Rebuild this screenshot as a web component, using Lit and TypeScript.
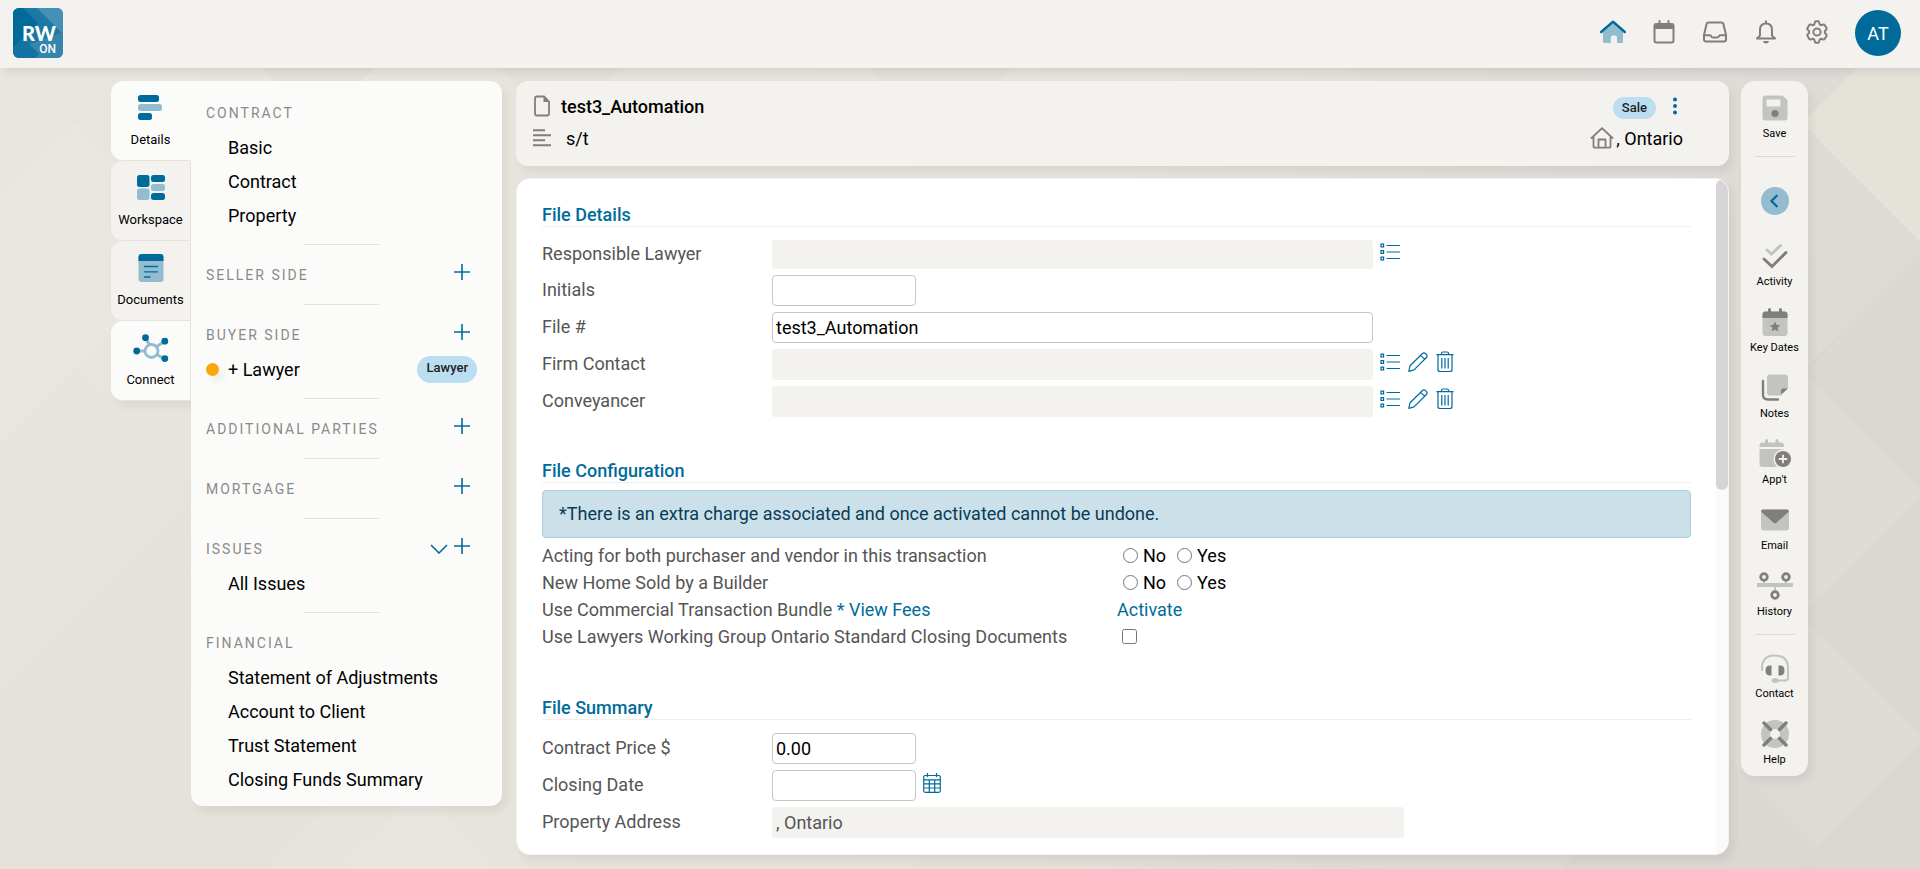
import { LitElement, html, svg, css, nothing, TemplateResult } from "lit";
import { customElement, property } from "lit/decorators.js";
import { classMap } from "lit/directives/class-map.js";

const BLUE = "#006b9b";
const PALE = "#93bcd0";
const GREY = "#807f7e";
const SOFT = "#c3c3c2";

const icon = (w: number, h: number, body: unknown) =>
  html`<svg width=${w} height=${h} viewBox="0 0 ${w} ${h}" fill="none" aria-hidden="true">${body}</svg>`;

const star = "M13 13.5l1.6 3.4 3.7.4-2.8 2.5.8 3.7-3.3-1.9-3.3 1.9.8-3.7-2.8-2.5 3.7-.4z";

const icons: Record<string, () => TemplateResult> = {
  home: () => icon(26, 24, svg`
    <path d="M3 12L13 3.500L23 12V21.500Q23 23 21.500 23H17V17.500Q17 15.500 15 15.500H12.500Q10.800 15.500 10.800 17.500V23H4.500Q3 23 3 21.500Z" fill=${PALE}/>
    <path d="M1.200 12L13 1.700L24.800 12" stroke=${BLUE} stroke-width="2.500" stroke-linecap="round" stroke-linejoin="round"/>`),
  calendar: () => icon(22, 24, svg`
    <rect x="1.500" y="4" width="19" height="18.500" rx="2" stroke=${GREY} stroke-width="2"/>
    <path d="M1 9V5Q1 3.300 3 3.300H19Q21 3.300 21 5V9Z" fill=${GREY}/>
    <path d="M6.500 1V4M15.500 1V4" stroke=${GREY} stroke-width="2" stroke-linecap="round"/>`),
  inbox: () => icon(24, 24, svg`
    <path d="M5.500 2.500H18.500Q20 2.500 20.400 4L23 15V19.500Q23 21.500 21 21.500H3Q1 21.500 1 19.500V15L3.600 4Q4 2.500 5.500 2.500Z M1 15.300H6.500Q8 15.300 8.300 16.500Q8.600 17.500 10 17.500H14Q15.400 17.500 15.700 16.500Q16 15.300 17.500 15.300H23" stroke=${GREY} stroke-width="2" stroke-linejoin="round"/>`),
  bell: () => icon(22, 24, svg`
    <path d="M11 1.200V3M2 18.500H20L17 15.500V10Q17 3.500 11 3.500Q5 3.500 5 10V15.500Z" stroke=${GREY} stroke-width="2" stroke-linejoin="round" stroke-linecap="round"/>
    <path d="M8 21H14Q13.500 23.500 11 23.500Q8.500 23.500 8 21Z" fill=${GREY}/>`),
  gear: () => icon(24, 24, svg`
    <path d="M9.900 2.200Q10 1.300 11 1.300H13Q14 1.300 14.100 2.200L14.500 4Q15 4.900 16 5.300L18.300 4.500Q19.200 4.200 19.700 5L21.600 8.300Q22 9 21.400 9.700L19.900 11Q19.600 12 19.900 13L21.400 14.300Q22 15 21.600 15.700L19.700 19Q19.200 19.800 18.300 19.500L16 18.700Q15 19.100 14.500 20L14.100 21.800Q14 22.700 13 22.700H11Q10 22.700 9.900 21.800L9.500 20Q9 19.100 8 18.700L5.700 19.500Q4.800 19.800 4.300 19L2.400 15.700Q2 15 2.600 14.300L4.100 13Q4.400 12 4.100 11L2.600 9.700Q2 9 2.400 8.300L4.300 5Q4.800 4.200 5.700 4.500L8 5.300Q9 4.900 9.500 4Z" stroke=${GREY} stroke-width="2" stroke-linejoin="round"/>
    <circle cx="12" cy="12" r="3.600" stroke=${GREY} stroke-width="2"/>`),

  details: () => icon(26, 26, svg`
    <rect x="0" y="0" width="21" height="7" rx="2.500" fill=${BLUE}/>
    <rect x="0" y="9" width="24" height="7" rx="2.500" fill=${PALE}/>
    <rect x="0" y="18" width="14" height="7" rx="2.500" fill=${BLUE}/>`),
  workspace: () => icon(28, 26, svg`
    <rect x="0" y="0" width="12.500" height="12" rx="2.500" fill=${BLUE}/>
    <rect x="0" y="13.500" width="12.500" height="11.500" rx="2.500" fill=${PALE}/>
    <rect x="14" y="0" width="14" height="7" rx="2.500" fill=${BLUE}/>
    <rect x="14" y="9" width="14" height="7" rx="2.500" fill=${PALE}/>
    <rect x="14" y="18" width="14" height="7" rx="2.500" fill=${BLUE}/>`),
  documents: () => icon(26, 28, svg`
    <rect x="0.500" y="0" width="25" height="28" rx="3" fill=${PALE}/>
    <path d="M0.500 7V3Q0.500 0 3.500 0H22.500Q25.500 0 25.500 3V7Z" fill=${BLUE}/>
    <path d="M6.500 12.500H19.500M6.500 17.800H19.500M6.500 23H12" stroke=${BLUE} stroke-width="1.300" stroke-linecap="round"/>`),
  connect: () => icon(36, 28, svg`
    <path d="M4 17H13M12.500 4L16.500 11M31.500 7.500L23 13M31.500 25L23 20" stroke=${PALE} stroke-width="3"/>
    <circle cx="18.500" cy="17" r="6.500" stroke=${PALE} stroke-width="2.800"/>
    <circle cx="3.700" cy="17" r="3.400" fill=${BLUE}/><circle cx="12.500" cy="3.700" r="3.400" fill=${BLUE}/>
    <circle cx="31.800" cy="7.200" r="3.400" fill=${BLUE}/><circle cx="31.800" cy="24.600" r="3.400" fill=${BLUE}/>`),

  plus: () => icon(16, 16, svg`<path d="M8 0V16M0 8H16" stroke=${BLUE} stroke-width="1.600"/>`),
  chevron: () => icon(18, 10, svg`<path d="M1 1L9 9L17 1" stroke=${BLUE} stroke-width="1.600"/>`),

  file: () => icon(18, 22, svg`
    <path d="M4 1.500H11L16 6.500V18.500Q16 20.500 14 20.500H4Q2 20.500 2 18.500V3.500Q2 1.500 4 1.500Z" stroke=${GREY} stroke-width="1.800"/>
    <path d="M10.500 1L16.500 7H10.500Z" fill=${GREY}/>`),
  lines: () => icon(18, 18, svg`<path d="M0 1.200H12M0 6.200H18M0 11.200H12M0 16.200H18" stroke=${GREY} stroke-width="2"/>`),
  house: () => icon(24, 22, svg`
    <path d="M1 11.500L12 1.200L23 11.500M3.500 10V19Q3.500 20.700 5 20.700H19Q20.500 20.700 20.500 19V10M8.500 20.500V12.500H15.500V20.500" stroke=${GREY} stroke-width="1.800" stroke-linejoin="round"/>`),
  dots: () => icon(6, 18, svg`<circle cx="3" cy="2.500" r="2" fill=${BLUE}/><circle cx="3" cy="9" r="2" fill=${BLUE}/><circle cx="3" cy="15.500" r="2" fill=${BLUE}/>`),

  list: () => icon(20, 18, svg`
    <path d="M6.500 2.500H20M6.500 9H20M6.500 15.500H20" stroke=${BLUE} stroke-width="1.200"/>
    <path d="M1 1.200H3.600V3.800H1ZM1 7.700H3.600V10.300H1ZM1 14.200H3.600V16.800H1Z" stroke=${BLUE} stroke-width="1.200"/>`),
  pencil: () => icon(20, 20, svg`
    <path d="M0.800 19.300L2 13.800L14.500 1.500Q16 0.200 17.700 1.800L18.300 2.400Q19.800 4 18.400 5.500L6 17.900ZM12.700 3.300L16.600 7.200" stroke=${BLUE} stroke-width="1.200" stroke-linejoin="round"/>`),
  trash: () => icon(18, 22, svg`
    <path d="M0.500 3.700H17.500M5.500 3.500V2.300Q5.500 1 7 1H11Q12.500 1 12.500 2.300V3.500M2 4V18.500Q2 20.500 4 20.500H14Q16 20.500 16 18.500V4M5.800 7V17.500M9 7V17.500M12.200 7V17.500" stroke=${BLUE} stroke-width="1.200"/>`),
  grid: () => icon(18, 20, svg`
    <rect x="0.700" y="2.500" width="16.600" height="16.800" rx="1.500" stroke=${BLUE} stroke-width="1.200"/>
    <path d="M1 6.800H17M1 10.800H17M1 15H17M6.300 7V19M11.700 7V19M4.500 0V4M13.500 0V4" stroke=${BLUE} stroke-width="1.200"/>`),

  save: () => icon(26, 26, svg`
    <path d="M4 .500H20.500L25.500 5V22.500Q25.500 25.500 22.500 25.500H3.500Q.500 25.500 .500 22.500V3.500Q.500 .500 4 .500Z" fill=${SOFT}/>
    <rect x="4.500" y="4.500" width="14" height="7" rx="1" fill="#f3f2ee"/><circle cx="13" cy="18.500" r="3.600" fill=${GREY}/>`),
  collapse: () => icon(28, 28, svg`
    <circle cx="14" cy="14" r="14" fill=${PALE}/><path d="M16.500 8L10.500 14L16.500 20" stroke=${BLUE} stroke-width="2.200"/>`),
  activity: () => icon(26, 26, svg`
    <path d="M5 7L9.500 11L18.500 2.500" stroke=${SOFT} stroke-width="3" stroke-linecap="round"/>
    <path d="M2 16L10 23.500L24 9.500" stroke=${GREY} stroke-width="3" stroke-linecap="round"/>`),
  keydates: () => icon(26, 28, svg`
    <rect x=".500" y="3.500" width="25" height="24.500" rx="3" fill=${SOFT}/>
    <path d="M.500 10V6.500Q.500 3.500 3.500 3.500H22.500Q25.500 3.500 25.500 6.500V10Z" fill=${GREY}/>
    <path d="M7.500 1.500V5M18.500 1.500V5" stroke=${GREY} stroke-width="3" stroke-linecap="round"/><path d=${star} fill=${GREY}/>`),
  notes: () => icon(28, 28, svg`
    <path d="M9 .500H24Q27 .500 27 3.500V14L20 21.500H9Q6 21.500 6 18.500V3.500Q6 .500 9 .500Z" fill=${SOFT}/>
    <path d="M20 20.500V16.500Q20 14.500 22 14.500H27Z" fill=${GREY}/>
    <path d="M2 7V21Q2 25.500 7 25.500H17" stroke=${GREY} stroke-width="2.400" stroke-linecap="round"/>`),
  appt: () => icon(34, 30, svg`
    <path d="M1.500 8V6.500Q1.500 3.500 4.500 3.500H23Q26 3.500 26 6.500V8ZM1.500 10H26V28H4.500Q1.500 28 1.500 25Z" fill=${SOFT}/>
    <path d="M8.500 1.500V5M19 1.500V5" stroke=${SOFT} stroke-width="3" stroke-linecap="round"/>
    <circle cx="25" cy="20" r="9.500" fill="#f3f2ee"/><circle cx="25" cy="20" r="8" fill=${GREY}/>
    <path d="M25 15.800V24.200M20.800 20H29.200" stroke="#f3f2ee" stroke-width="1.800"/>`),
  email: () => icon(28, 22, svg`
    <rect x="0" y=".500" width="28" height="21" rx="3" fill=${SOFT}/>
    <path d="M2 .500H26Q28 .500 28 2.500L15.500 13.700Q14 15 12.500 13.700L0 2.500Q0 .500 2 .500Z" fill=${GREY}/>`),
  history: () => icon(36, 28, svg`
    <path d="M1 12H35V14H1Z M7 8V12M29 8V12M18 14V19" fill=${SOFT} stroke=${SOFT} stroke-width="2"/>
    <circle cx="7" cy="5" r="3.300" stroke=${GREY} stroke-width="2.800"/><circle cx="29" cy="5" r="3.300" stroke=${GREY} stroke-width="2.800"/>
    <circle cx="18" cy="23" r="3.300" stroke=${GREY} stroke-width="2.800"/>`),
  contact: () => icon(30, 30, svg`
    <path d="M2 17V15Q2 2.500 15 2.500Q28 2.500 28 15V24.500Q28 27.500 25 27.500H16" stroke=${SOFT} stroke-width="2" stroke-linecap="round"/>
    <ellipse cx="15" cy="27.500" rx="3.500" ry="2.500" fill=${SOFT}/>
    <path d="M11.500 12.500V22.500H10Q5.500 22.500 5.500 17.500Q5.500 12.500 10 12.500ZM18.500 12.500V22.500H20Q24.500 22.500 24.500 17.500Q24.500 12.500 20 12.500Z" fill=${GREY}/>`),
  help: () => icon(28, 28, svg`
    <circle cx="14" cy="14" r="9.500" stroke=${SOFT} stroke-width="9"/>
    <path d="M3 3L9.500 9.500M25 3L18.500 9.500M3 25L9.500 18.500M25 25L18.500 18.500" stroke=${GREY} stroke-width="3.400" stroke-linecap="round"/>`),
};

const reset = css`
  :host { font-family: Roboto, "Liberation Sans", sans-serif; }
  * { box-sizing: border-box; }
  svg { display: block; flex: none; }
  a { color: inherit; text-decoration: none; }
  button { font: inherit; color: inherit; background: none; border: 0; padding: 0; margin: 0; cursor: pointer; }
`;

@customElement("rw-backdrop")
class RwBackdrop extends LitElement {
  static styles = css`
    :host { display: block; }
    svg { display: block; width: 100%; height: 100%; }
  `;
  render() {
    return html`<svg viewBox="0 0 1920 869" preserveAspectRatio="xMidYMid slice" aria-hidden="true">
      <defs><linearGradient id="base" x1="0" y1="0" x2="1" y2="0.200">
        <stop offset="0" stop-color="#e8e5de"/><stop offset=".600" stop-color="#e6e3dc"/>
        <stop offset=".850" stop-color="#dfdcd7"/><stop offset="1" stop-color="#dedbd6"/>
      </linearGradient></defs>
      <rect width="1920" height="869" fill="url(#base)"/>
      <path d="M75 123L198 246L0 444V196Z" fill="#eae7e0" opacity=".6"/>
      <path d="M75 370L198 493L0 691V445Z" fill="#e5e2db" opacity=".6"/>
      <path d="M0 740L129 869H0ZM198 493L420 715L266 869H129L0 740V691Z" fill="#e4e1db" opacity=".6"/>
      <path d="M340 869L420 790L499 869Z" fill="#e9e6df" opacity=".7"/>
      <path d="M260 68H375L320 120ZM500 68H620L560 128ZM1350 68H1600L1475 193ZM870 68H1010L940 138Z" fill="#dfdcd6" opacity=".5"/>
      <path d="M1560 869L1700 729L1840 869Z" fill="#dbd8d3"/>
      <path d="M1802 123L1857 68H1920V241Z" fill="#e5e2da"/>
      <g fill="#dbd8d3" stroke="#d8d5d0">
        <path d="M1803 371L1925 249V493Z"/><path d="M1803 616L1925 494V738Z"/><path d="M1803 862L1925 740V984Z"/>
      </g>
    </svg>`;
  }
}

@customElement("rw-header")
class RwHeader extends LitElement {
  static styles = [reset, css`
    :host { display: block; }
    .bar { height: 68px; display: flex; align-items: center; justify-content: space-between; padding: 0 19px 2px 13px;
      background: #f3f2ee; box-shadow: 6px 4px 8px rgba(0, 0, 0, .08); }
    .brand { position: relative; display: block; width: 50px; height: 50px; border-radius: 6px; overflow: hidden; color: #fff; }
    .rw { position: absolute; left: 9px; top: 16px; font: 900 20px/18px Lato, Roboto, sans-serif; }
    .on { position: absolute; right: 7px; top: 35px; font: 500 12px/12px Roboto, sans-serif; }
    .brand svg { position: absolute; inset: 0; }
    .actions { display: flex; align-items: center; }
    .actions button { width: 51px; padding-bottom: 2px; display: grid; place-items: center; }
    .actions .avatar { width: 46px; height: 46px; margin-left: 13px; padding: 0; border-radius: 50%; background: #006b9b; color: #fff; font-size: 18px; }
  `];
  render() {
    const items = [["home", "Home"], ["calendar", "Calendar"], ["inbox", "Inbox"], ["bell", "Notifications"], ["gear", "Settings"]];
    return html`<header class="bar">
      <a class="brand" href="#" aria-label="Home page">
        ${icon(50, 50, svg`<rect width="50" height="50" fill="#1e78a4"/>
          <path d="M0 0H10L25 15L0 40Z" fill="#006b9b"/><path d="M0 0L14 14L0 28Z" fill="#006b9b"/>
          <path d="M24 0H50V26Z" fill="#4491b5"/><path d="M50 24V50H24L12 38Z" fill="#3585ad"/><path d="M0 40L10 30L26 46L22 50H0Z" fill="#1573a1"/>`)}
        <span class="rw">RW</span><span class="on">ON</span>
      </a>
      <nav class="actions">
        ${items.map(([k, label]) => html`<button aria-label=${label}>${icons[k]()}</button>`)}
        <button class="avatar">AT</button>
      </nav>
    </header>`;
  }
}

@customElement("rw-tabs")
class RwTabs extends LitElement {
  static styles = [reset, css`
    :host { display: block; }
    .tabs { display: flex; flex-direction: column; border-radius: 12px 0 0 12px; box-shadow: 4px 6px 8px rgba(0, 0, 0, .05); }
    .tab { height: 80px; display: grid; grid-template-rows: 28px 20px; row-gap: 8px; align-content: center; justify-items: center; align-items: center;
      padding-top: 2px; border: solid #e8e4dd; border-width: 0 1px 1px 0; border-radius: 12px 0 0 12px;
      background: #f3f2ee; font-size: 13px; line-height: 20px; }
    .lit { background: #fbfcfa; }
    .on { border-right-color: #fbfcfa; }
  `];
  render() {
    const tabs = [["details", "Details"], ["workspace", "Workspace"], ["documents", "Documents"], ["connect", "Connect"]];
    return html`<nav class="tabs">${tabs.map(([k, label], i) => html`
      <button class=${classMap({ tab: true, lit: i === 0 || i === 3, on: i === 0 })}>${icons[k]()}<span>${label}</span></button>`)}</nav>`;
  }
}

type NavSection = { title: string; add?: boolean; open?: boolean; items: { label: string; badge?: string }[] };

const sections: NavSection[] = [
  { title: "CONTRACT", items: [{ label: "Basic" }, { label: "Contract" }, { label: "Property" }] },
  { title: "SELLER SIDE", add: true, items: [] },
  { title: "BUYER SIDE", add: true, items: [{ label: "+ Lawyer", badge: "Lawyer" }] },
  { title: "ADDITIONAL PARTIES", add: true, items: [] },
  { title: "MORTGAGE", add: true, items: [] },
  { title: "ISSUES", add: true, open: true, items: [{ label: "All Issues" }] },
  { title: "FINANCIAL", items: [{ label: "Statement of Adjustments" }, { label: "Account to Client" }, { label: "Trust Statement" }, { label: "Closing Funds Summary" }] },
];

@customElement("rw-sidebar")
class RwSidebar extends LitElement {
  static styles = [reset, css`
    :host { display: block; }
    .panel { padding: 2px 25px 0 15px; background: #fbfcfa; border-radius: 0 12px 12px 12px; box-shadow: 4px 6px 8px rgba(0, 0, 0, .06); }
    section { padding: 12px 0; }
    section:last-child { padding-bottom: 10px; }
    hr { width: 75px; height: 1px; margin: 0 auto; border: 0; background: #e2e1df; }
    .head { height: 35px; display: flex; align-items: center; justify-content: space-between; }
    h2 { margin: 0; font-size: 14px; font-weight: 400; letter-spacing: 2px; color: #8a8a8a; }
    .tools { display: flex; align-items: flex-end; gap: 6px; padding: 0 7px 5px 0; }
    .item { height: 34px; display: grid; grid-template-columns: 22px 1fr auto; align-items: center; font-size: 18px; color: #000; }
    .dot { display: block; width: 13px; height: 13px; border-radius: 50%; background: #f9a70b; box-shadow: 5px 6px 6px rgba(0, 0, 0, .05); }
    .badge { height: 27px; padding: 0 9px; border-radius: 14px; background: #bbdef0; color: #222; font-size: 13px; line-height: 24px; font-weight: 500; }
  `];
  render() {
    return html`<nav class="panel">${sections.map((s, i) => html`
      ${i ? html`<hr>` : nothing}
      <section>
        <div class="head"><h2>${s.title}</h2>
          <div class="tools">
            ${s.open ? html`<button aria-label="Collapse issues">${icons.chevron()}</button>` : nothing}
            ${s.add ? html`<button aria-label="Add to ${s.title}">${icons.plus()}</button>` : nothing}
          </div>
        </div>
        ${s.items.map(it => html`<a class="item" href="#">
          <span>${it.badge ? html`<span class="dot"></span>` : nothing}</span>
          <span>${it.label}</span>${it.badge ? html`<span class="badge">${it.badge}</span>` : nothing}</a>`)}
      </section>`)}</nav>`;
  }
}

@customElement("rw-summary")
class RwSummary extends LitElement {
  static styles = [reset, css`
    :host { display: block; }
    .card { padding: 9px 46px 12px 17px; background: #f3f2ee; border-radius: 12px; font-size: 18px; color: #000;
      box-shadow: 4px 6px 8px rgba(0, 0, 0, .06); }
    .row { display: flex; align-items: center; justify-content: space-between; height: 32px; }
    .group { display: flex; align-items: center; gap: 10px; }
    .group.wide { gap: 15px; }
    .group.tight { gap: 2px; }
    h1 { margin: 0; font-size: 18px; font-weight: 500; }
    .badge { height: 22px; margin-top: 3px; padding: 0 9px; border-radius: 11px; background: #bbdef0; color: #222; font-size: 13px; line-height: 22px; font-weight: 500; }
    .menu { display: flex; gap: 16px; align-items: center; padding-right: 5px; }
  `];
  render() {
    return html`<header class="card">
      <div class="row"><div class="group">${icons.file()}<h1>test3_Automation</h1></div>
        <div class="menu"><span class="badge">Sale</span><button aria-label="More">${icons.dots()}</button></div></div>
      <div class="row"><div class="group wide">${icons.lines()}<span>s/t</span></div>
        <div class="group tight">${icons.house()}<span>, Ontario</span></div></div>
    </header>`;
  }
}

type Field = { id: string; label: string; kind: "locked" | "short" | "long" | "address"; value?: string; tools?: string[]; compact?: boolean };

@customElement("rw-field")
class RwField extends LitElement {
  @property({ attribute: false }) field!: Field;
  static styles = [reset, css`
    :host { display: block; }
    .row { display: grid; grid-template-columns: 230px 1fr; align-items: center; font-size: 18px; color: #555; }
    label { padding-bottom: 2px; }
    .control { display: flex; align-items: center; gap: 7px; }
    input { width: 144px; height: 31px; padding: 0 3px; border: 1px solid #c6c6c6; border-radius: 4px; background: #fff;
      font: 400 18px Roboto, sans-serif; color: #000; }
    .long input, .locked input { width: 601px; }
    .address input { width: 632px; }
    .locked input, .address input { background: #f3f2ee; border-color: #f3f2ee; color: #555; border-radius: 3px; }
    .compact input { height: 29px; }
    .tools { display: flex; align-items: center; gap: 8px; padding-bottom: 6px; }
  `];
  render() {
    const f = this.field;
    const locked = f.kind === "locked" || f.kind === "address";
    return html`<div class=${classMap({ row: true, [f.kind]: true, compact: !!f.compact })}>
      <label for=${f.id}>${f.label}</label>
      <div class="control"><input id=${f.id} type="text" .value=${f.value ?? ""} ?readonly=${locked}>
        ${f.tools ? html`<div class="tools">${f.tools.map(t => html`<button aria-label="${t} ${f.label}">${icons[t]()}</button>`)}</div>` : nothing}
      </div></div>`;
  }
}

const details: Field[] = [
  { id: "lawyer", label: "Responsible Lawyer", kind: "locked", tools: ["list"], compact: true },
  { id: "initials", label: "Initials", kind: "short" },
  { id: "file", label: "File #", kind: "long", value: "test3_Automation" },
  { id: "firm", label: "Firm Contact", kind: "locked", tools: ["list", "pencil", "trash"] },
  { id: "conveyancer", label: "Conveyancer", kind: "locked", tools: ["list", "pencil", "trash"] },
];
const summary: Field[] = [
  { id: "price", label: "Contract Price $", kind: "short", value: "0.00" },
  { id: "closing", label: "Closing Date", kind: "short", tools: ["grid"] },
  { id: "address", label: "Property Address", kind: "address", value: ", Ontario" },
];

@customElement("rw-form")
class RwForm extends LitElement {
  static styles = [reset, css`
    :host { display: flex; min-height: 0; }
    .card { flex: 1; min-width: 0; display: flex; background: #fff; border: 1px solid #f3f2ee; border-radius: 14px; overflow: hidden;
      box-shadow: 4px 6px 8px rgba(0, 0, 0, .06); }
    .body { flex: 1; min-width: 0; overflow: hidden; padding: 20px 25px 0 25px; font-size: 18px; color: #555; }
    .track { flex: none; width: 12px; padding-top: 1px; background: #fafafa; }
    .thumb { height: 46%; border-radius: 6px; background: #d6d4d6; }
    h2 { margin: 0; height: 28px; padding-top: 4px; line-height: 23px; border-bottom: 1px solid #efefef; font-size: 18px; font-weight: 500; color: #006b9b; }
    .fields { display: grid; gap: 6px; padding: 13px 0 38px; }
    .alert { margin: 7px 0 4px; height: 48px; padding: 0 16px; border: 1px solid #a9cfdc; border-radius: 4px; background: #cce0ea;
      color: #073c56; line-height: 46px; }
    .options { display: grid; padding-bottom: 42px; }
    .option { display: grid; grid-template-columns: 575px 1fr; align-items: center; height: 27px; line-height: 27px; }
    a { color: #006b9b; }
    .choices { display: flex; gap: 11px; padding-left: 6px; color: #000; }
    .choices label { display: flex; align-items: center; gap: 5px; }
    input { width: 15px; height: 15px; margin: 0; }
    .tick { padding-left: 5px; display: flex; }
  `];
  private yesNo(name: string, label: string) {
    return html`<div class="option" role="radiogroup" aria-labelledby=${name}><span id=${name}>${label}</span>
      <div class="choices"><label><input type="radio" name=${name} value="no">No</label>
        <label><input type="radio" name=${name} value="yes">Yes</label></div></div>`;
  }
  render() {
    return html`<div class="card"><div class="body">
      <h2>File Details</h2>
      <div class="fields">${details.map(f => html`<rw-field .field=${f}></rw-field>`)}</div>
      <h2>File Configuration</h2>
      <div class="alert">*There is an extra charge associated and once activated cannot be undone.</div>
      <div class="options">
        ${this.yesNo("both", "Acting for both purchaser and vendor in this transaction")}
        ${this.yesNo("newhome", "New Home Sold by a Builder")}
        <div class="option"><span>Use Commercial Transaction Bundle <a href="#">* View Fees</a></span><a href="#">Activate</a></div>
        <div class="option"><label for="lwg">Use Lawyers Working Group Ontario Standard Closing Documents</label>
          <span class="tick"><input id="lwg" type="checkbox"></span></div>
      </div>
      <h2>File Summary</h2>
      <div class="fields">${summary.map(f => html`<rw-field .field=${f}></rw-field>`)}</div>
    </div><div class="track"><div class="thumb"></div></div></div>`;
  }
}

@customElement("rw-rail")
class RwRail extends LitElement {
  static styles = [reset, css`
    :host { display: block; }
    .rail { display: flex; flex-direction: column; padding: 9px 0 0; background: #f3f2ee; border-radius: 14px;
      box-shadow: 4px 6px 8px rgba(0, 0, 0, .06); }
    .tool { height: 60px; margin-bottom: 6px; display: grid; grid-template-rows: 30px 16px; row-gap: 3px; justify-items: center; align-items: center;
      align-content: start; padding-top: 3px; font-size: 11px; line-height: 16px; color: #000; }
    .tool:last-child { margin-bottom: 0; }
    .toggle { height: 81px; display: grid; place-items: center; padding-top: 8px; align-content: start; padding-top: 30px; }
    hr { width: 40px; height: 1px; margin: 0 auto; border: 0; background: #dddbd8; }
    .gap { padding-top: 15px; }
  `];
  private tool(k: string, label: string) {
    return html`<button class="tool">${icons[k]()}<span>${label}</span></button>`;
  }
  render() {
    return html`<nav class="rail">
      ${this.tool("save", "Save")}<hr>
      <button class="toggle" aria-label="Collapse">${icons.collapse()}</button>
      ${this.tool("activity", "Activity")}${this.tool("keydates", "Key Dates")}${this.tool("notes", "Notes")}
      ${this.tool("appt", "App't")}${this.tool("email", "Email")}${this.tool("history", "History")}<hr>
      <div class="gap"></div>
      ${this.tool("contact", "Contact")}${this.tool("help", "Help")}
    </nav>`;
  }
}

@customElement("app-root")
class AppRoot extends LitElement {
  static styles = css`
    :host { display: flex; flex-direction: column; height: 100vh; position: relative; overflow: hidden; background: #e6e3dc; }
    rw-backdrop { position: absolute; inset: 0; }
    rw-header, .workspace { position: relative; }
    .workspace { flex: 1; min-height: 0; display: grid; grid-template-columns: 80px 311px minmax(0, 1fr) 67px; align-items: start;
      padding: 13px 112px 14px 111px; }
    .main { display: grid; grid-template-rows: auto minmax(0, 1fr); gap: 12px; height: 100%; min-height: 0; padding: 0 12px 0 14px; }
  `;
  render() {
    return html`<rw-backdrop></rw-backdrop><rw-header></rw-header>
      <div class="workspace"><rw-tabs></rw-tabs><rw-sidebar></rw-sidebar>
        <main class="main"><rw-summary></rw-summary><rw-form></rw-form></main>
        <rw-rail></rw-rail></div>`;
  }
}
